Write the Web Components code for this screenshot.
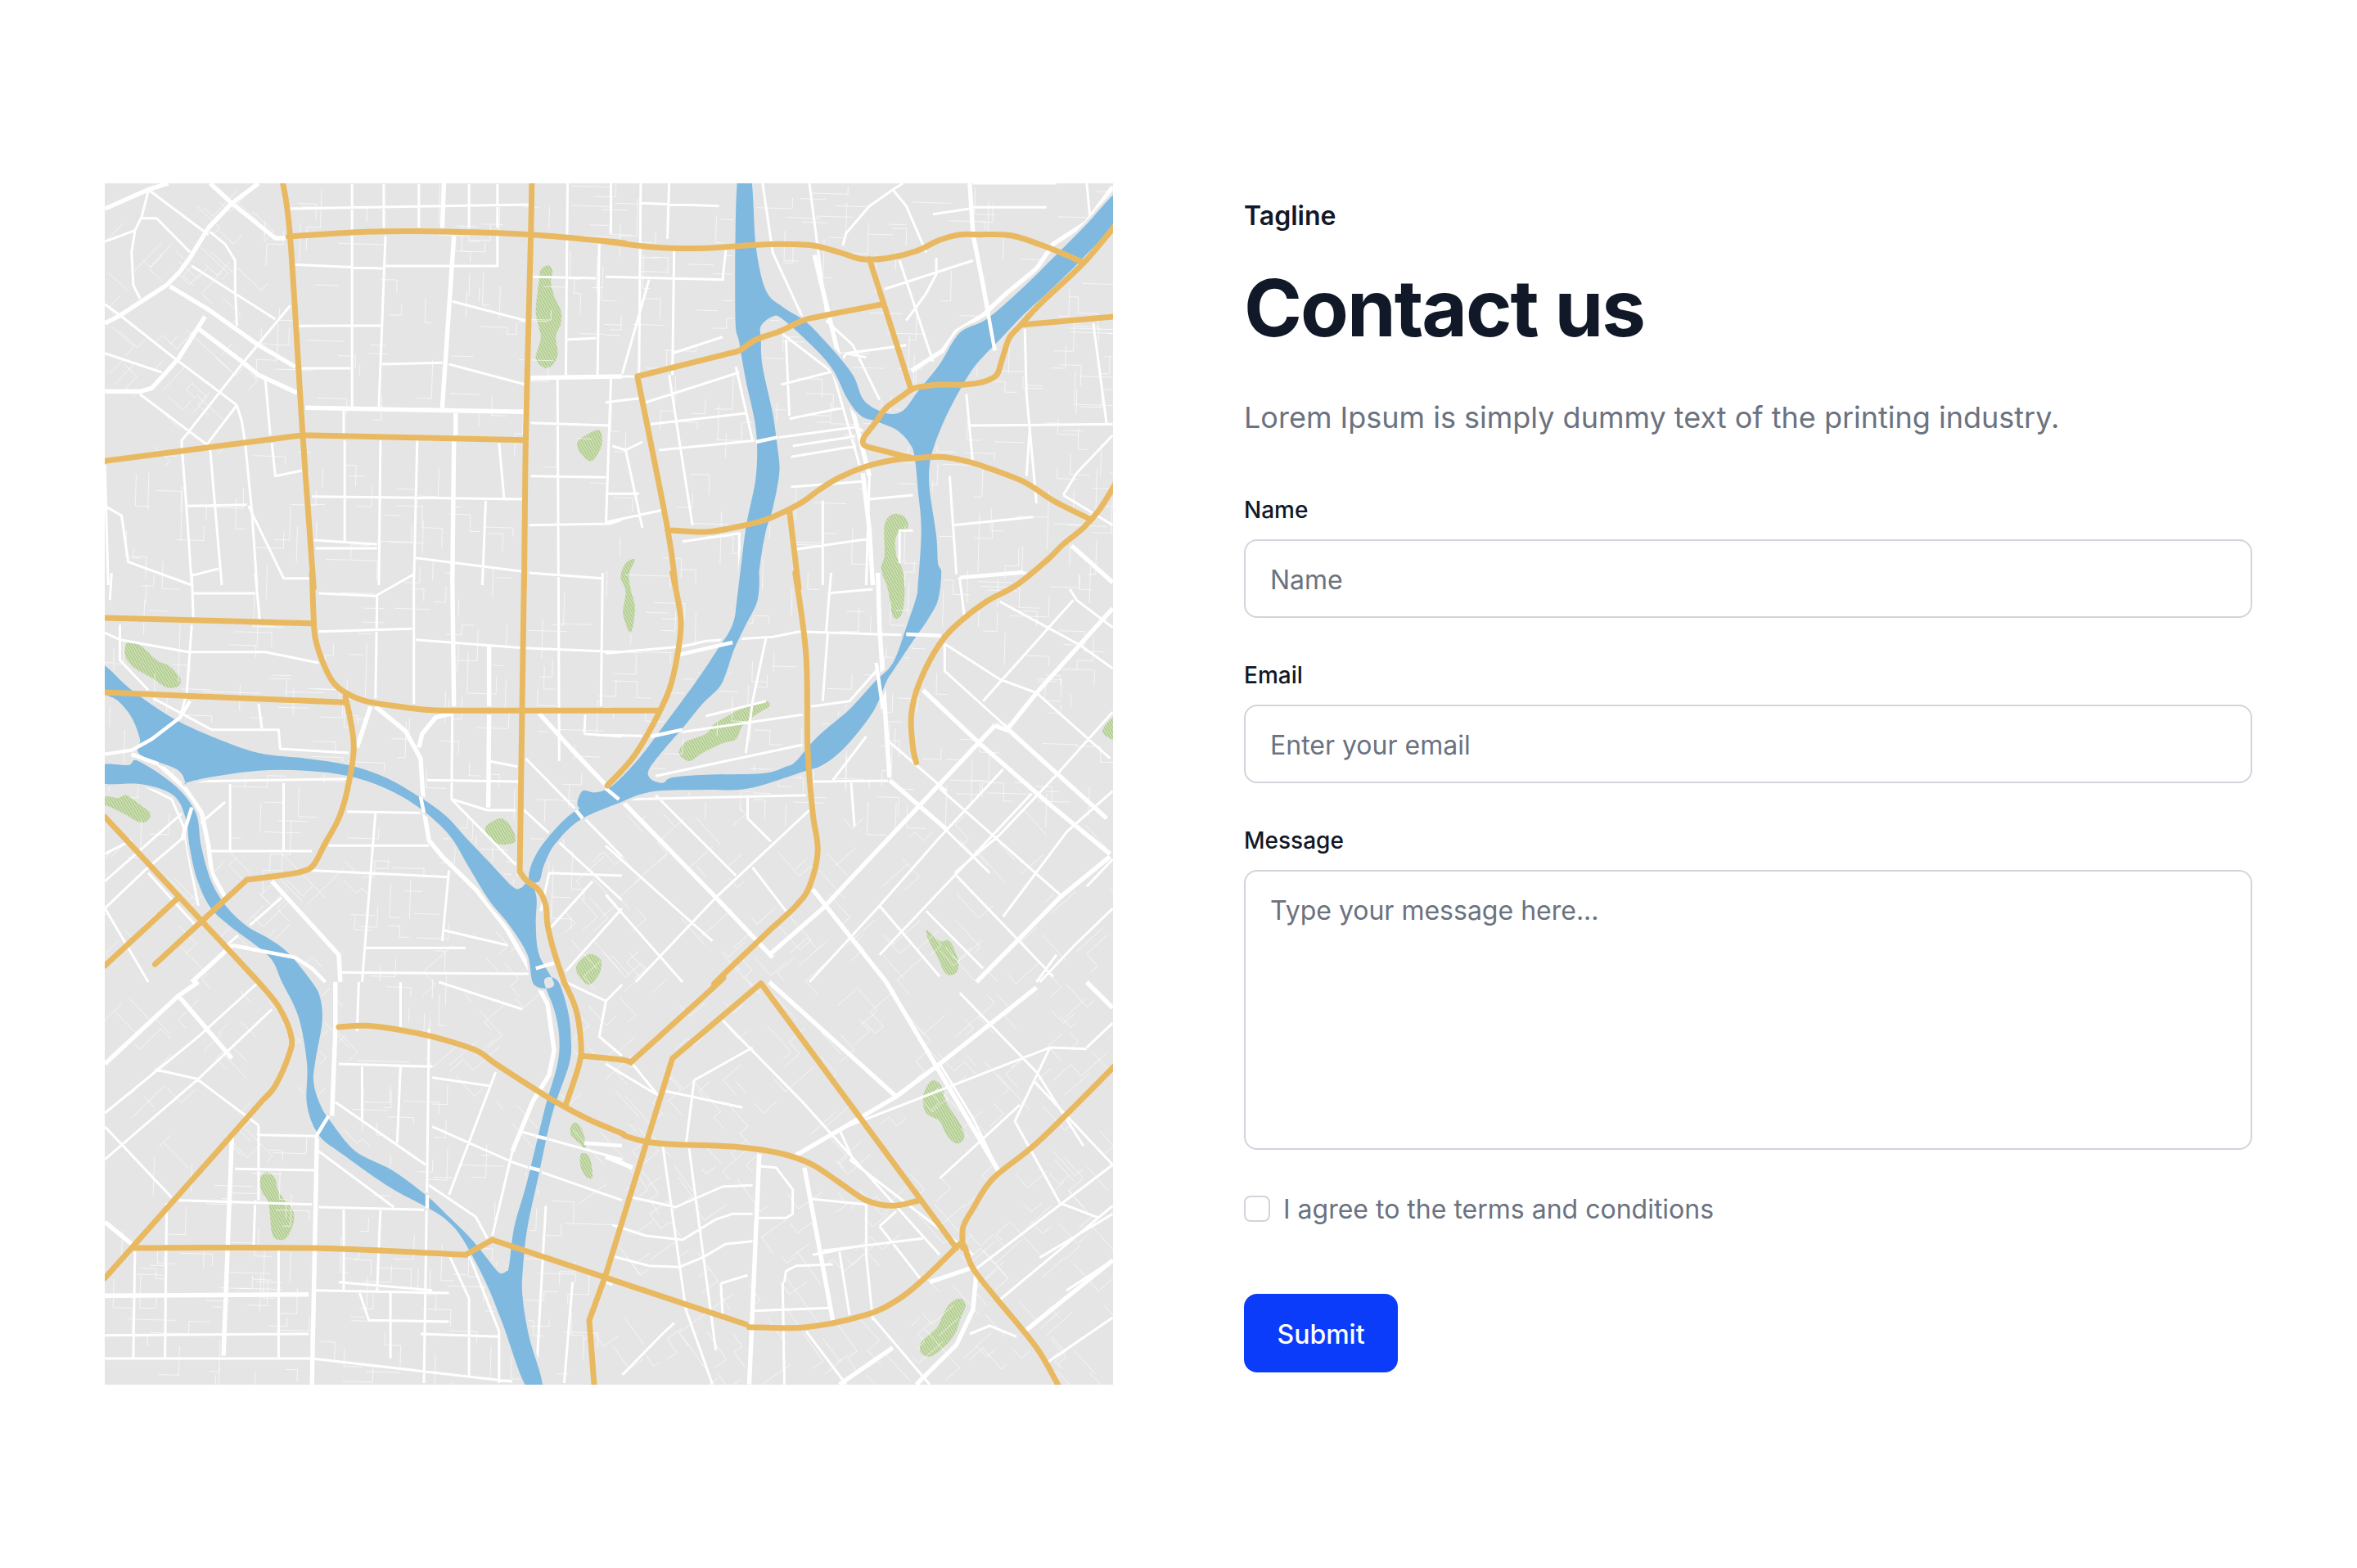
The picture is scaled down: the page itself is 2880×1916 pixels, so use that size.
<!DOCTYPE html>
<html lang="en">
<head>
<meta charset="utf-8">
<title>Contact us</title>
<style>
html,body{margin:0;padding:0;background:#fff}
body{font-family:Inter,"Liberation Sans",sans-serif}
</style>
</head>
<body>
<contact-page>
  <map-panel slot="map"></map-panel>
  <contact-form slot="form"></contact-form>
</contact-page>
<script>
/* ---------- map data: coordinates noted per inspected tile ---------- */
const TILES={A:[120,215],B:[740,215],C:[120,700],D:[740,700],E:[120,1200],F:[740,1200]};
function conv(t,x,y){const o=TILES[t];return [o[0]+x/2.45-128,o[1]+y/3-224];}
function parse(str){
  let t='A';const subs=[];
  str.split('/').forEach(s=>{
    const pts=[];
    s.trim().split(/\s+/).forEach(k=>{
      if(/^[A-F]$/.test(k)){t=k;return;}
      if(!k)return;
      const [x,y]=k.split(',').map(Number);
      pts.push(conv(t,x,y));
    });
    if(pts.length)subs.push(pts);
  });
  return subs;
}
const f=n=>n.toFixed(1);
function line(pts){return 'M'+pts.map(p=>f(p[0])+' '+f(p[1])).join('L');}
function smooth(pts,closed){
  const n=pts.length;let d='M'+f(pts[0][0])+' '+f(pts[0][1]);
  const g=i=>closed?pts[(i+n)%n]:pts[Math.max(0,Math.min(n-1,i))];
  const last=closed?n:n-1;
  for(let i=0;i<last;i++){
    const p0=g(i-1),p1=g(i),p2=g(i+1),p3=g(i+2);
    d+='C'+f(p1[0]+(p2[0]-p0[0])/6)+' '+f(p1[1]+(p2[1]-p0[1])/6)+' '+f(p2[0]-(p3[0]-p1[0])/6)+' '+f(p2[1]-(p3[1]-p1[1])/6)+' '+f(p2[0])+' '+f(p2[1]);
  }
  return d+(closed?'Z':'');
}
const polys=s=>parse(s).map(line).join('');
const curves=s=>parse(s).map(p=>smooth(p,false)).join('');
const blobs=s=>parse(s).map(p=>smooth(p,true)).join('');

const THICK=`A 20,120 150,50 210,27 / 335,27 400,100 530,228 560,228 / 480,27 400,100 330,190 275,300 245,350 205,400 60,515 20,540 /
 215,405 330,490 480,620 590,700 / 300,560 430,680 480,730 595,795 / 20,790 125,790 160,778 185,745 240,670 320,515 /
 1065,220 1030,850 / 1035,27 1030,190 / 620,850 1280,865 / 1070,860 1070,950 / 1065,970 1060,1500 / 1295,740 1568,735 /
 B 1090,27 1100,215 1130,400 1165,640 / 1200,430 1130,510 1050,570 1010,640 915,715 / 1518,40 1440,170 1340,250 1290,340 1200,430 / 1395,1355 1518,1490 /
 770,1090 790,1300 800,1500 / 625,290 690,620 790,1100 /
 C 100,665 180,700 260,790 310,880 330,1000 340,1100 380,1190 / 830,490 920,580 965,680 975,870 990,980 1030,1040 1130,1160 1220,1300 1300,1470 /
 1060,515 1010,530 970,590 960,640 / 815,490 775,640 / 1320,515 1420,650 1568,840 / 520,1130 720,1400 725,1500 / 280,1500 400,1365 /
 1060,0 1065,490 / 1170,520 1168,860 / 1170,270 1170,490 /
 D 815,0 820,200 850,750 / 10,790 60,850 330,1190 500,1410 / 950,430 1115,620 1340,860 1510,1030 / 850,760 1020,940 / 620,1160 840,1500 /
 1165,560 650,1230 490,1400 / 1518,130 1290,440 1205,570 / 1510,1040 1360,1190 1110,1500 / 1165,560 1210,580 1500,900 /
 E 20,300 240,50 300,0 / 710,0 710,170 700,490 / 655,570 640,1475 / 400,570 375,1370 / 1310,0 1345,80 1365,250 1350,340 1300,440 1240,620 /
 20,880 100,960 / 240,50 400,280 / 20,1150 630,1145 /
 F 840,0 1175,690 / 490,0 870,420 / 0,640 80,680 / 460,630 430,1475 / 595,680 680,1240 / 570,635 870,420 1000,300 1290,20 / 970,1100 1090,1050 / 1440,0 1518,95 / 1250,1285 1518,1020 / 700,1475 860,1340 / 1110,1060 1100,1200 1050,1330 930,1475`;

const MED=`A 130,155 175,155 275,280 / 155,55 275,165 330,215 / 20,240 110,200 / 110,200 100,280 105,400 125,450 / 110,200 130,150 150,55 /
 335,205 380,250 410,310 410,410 415,550 / 280,330 530,525 / 20,470 70,515 230,670 415,840 / 250,985 250,970 430,690 575,475 / 125,800 325,985 /
 325,985 415,840 / 415,840 430,900 440,980 460,1230 475,1500 / 20,650 190,720 / 250,985 265,1230 280,1500 / 335,1000 370,1500 / 265,1210 445,1205 / 280,1465 360,1440 /
 20,1060 30,1500 / 20,1210 70,1245 90,1415 280,1500 / 450,1210 555,1475 640,1475 / 500,740 515,950 / 520,980 530,1100 610,1080 / 640,1175 1280,1185 /
 570,120 1290,105 / 580,325 860,340 / 860,330 1195,330 1195,220 / 860,220 840,850 / 760,30 760,850 / 960,30 960,190 / 855,30 855,190 / 1195,30 1195,190 / 1110,30 1110,190 /
 600,550 850,548 / 610,705 755,705 / 850,690 1030,685 / 1050,690 1280,765 / 1060,460 1280,530 / 735,855 735,945 / 738,970 738,1340 / 845,970 840,1500 / 955,970 945,1500 /
 1200,980 1215,1180 / 1160,1190 1150,1500 / 645,1335 835,1350 / 650,1365 835,1365 / 950,1400 1270,1450 / 1405,27 1400,730 / 1535,27 1535,210 / 1500,250 1495,730 /
 1300,370 1490,375 / 1400,600 1490,595 / 1375,745 1378,1500 / 1535,745 1520,1280 / 1295,905 1530,915 / 1295,1100 1520,1105 / 1290,1280 1530,1275 1568,1260 / 1290,1455 1510,1475 /
 B 0,370 355,380 / 105,27 100,730 / 0,735 90,735 / 190,27 185,230 / 105,100 340,110 / 205,270 200,730 / 360,270 350,380 / 130,380 50,725 / 200,650 350,590 / 0,830 100,815 /
 120,830 400,720 / 190,730 260,1280 / 135,910 420,870 / 160,1005 450,970 510,960 750,920 770,935 / 20,990 60,1005 110,975 / 60,1005 110,1290 / 0,1165 100,1165 / 0,1270 170,1225 /
 390,700 440,970 / 470,27 500,280 590,520 / 560,990 745,955 / 540,600 550,880 / 525,765 700,710 / 550,890 710,850 / 555,1030 750,990 / 555,1140 770,1120 / 660,530 740,620 820,820 / 680,720 760,1060 /
 720,650 780,665 / 720,650 685,720 / 530,580 680,720 / 720,650 900,620 / 610,27 660,500 / 835,415 1100,310 / 880,310 980,680 / 990,300 990,360 960,430 900,530 / 710,255 720,210 790,110 860,50 890,27 / 860,50 900,110 960,280 /
 1100,115 1320,115 / 980,140 1090,120 / 1440,27 1450,150 / 1100,27 1350,27 / 1255,560 1260,800 1290,1200 / 1460,540 1500,910 / 1090,915 1518,910 / 1270,920 1260,1100 / 1080,800 1100,1060 / 1370,1170 1410,1090 1518,950 / 1370,1170 1518,1280 / 790,1185 920,1170 / 920,1300 880,1300 880,1420 / 560,1370 790,1330 / 650,1190 650,1500 / 780,1500 790,1100 / 1030,1100 1050,1460 /
 230,1340 400,1310 400,1500 / 1040,1280 1280,1250 / 1060,1470 1250,1450 / 
 C 20,220 65,245 270,290 500,290 660,330 / 65,190 65,320 150,430 / 165,460 340,575 540,575 545,645 750,660 / 260,765 750,755 / 470,0 485,190 / 480,480 490,570 / 280,0 285,170 / 285,75 470,75 /
 280,190 265,440 245,530 / 40,0 35,100 / 660,75 830,85 945,5 / 835,85 830,460 / 660,215 940,205 / 945,0 945,480 / 950,245 1270,275 1568,290 / 1378,0 1380,690 /
 1280,680 1568,1040 / 1275,870 1568,1200 / 1060,515 1058,830 1250,1070 / 1060,830 1165,870 1250,870 / 1170,690 1255,710 / 985,760 1260,765 / 1455,590 1568,600 / 1458,520 1455,590 / 1510,0 1505,490 /
 745,875 965,880 / 335,1020 640,1020 / 690,1000 990,1000 / 395,775 395,1020 / 555,770 555,1020 / 830,880 790,1500 / 620,1090 1050,1115 / 1050,1090 1030,1350 / 1035,1310 1225,1365 / 800,1375 1100,1375 / 730,1465 1300,1470 /
 380,840 140,1090 20,1230 / 280,850 20,1130 / 20,1230 150,1500 / 550,1190 380,1370 / 20,770 130,775 220,830 255,930 280,1100 300,1220 / 1350,1100 1568,1110 / 1350,1100 1325,1240 / 1480,1130 1355,1300 / 1568,1230 1400,1460 / 150,1100 290,1290 / 20,1030 100,980 /
 D 0,295 230,270 300,250 500,235 580,215 810,225 1005,230 / 1015,260 1180,390 1290,440 1510,680 / 1015,260 1015,360 1205,570 / 1180,105 1420,265 1518,350 / 1400,100 1130,470 / 1190,720 1000,970 820,1220 610,1500 / 1518,510 1350,740 1180,960 1045,1100 /
 1518,800 1380,950 1190,1260 / 1518,1230 1400,1370 1300,1500 / 1275,810 1060,1090 820,1400 / 610,870 330,1190 90,1500 / 1000,790 1370,1190 / 840,610 1020,800 / 950,860 1150,1100 / 150,815 390,1110 / 0,1000 320,1350 / 0,1180 230,1500 / 440,1080 540,1240 / 820,1220 1000,1480 / 960,1240 1130,1450 / 1050,1110 1340,1480 /
 60,830 600,815 / 0,595 110,598 / 135,600 590,520 / 615,490 730,470 810,360 / 620,765 845,762 / 150,745 590,630 / 665,220 650,470 / 800,60 665,75 / 660,220 675,0 / 425,815 425,900 495,985 / 735,770 745,930 / 680,760 780,600 / 300,525 480,470 / 480,240 440,470 420,660 / 1390,60 1410,100 1518,200 / 1055,20 1260,0 / 1060,20 1075,170 /
 1350,1400 1290,1500 / 1440,1150 1518,1050 /
 E 20,480 300,200 480,0 / 20,650 300,355 520,100 / 170,320 295,355 480,525 / 20,530 220,790 / 475,560 650,565 / 480,525 480,800 / 410,685 650,690 / 240,800 640,815 / 660,825 975,835 / 720,300 990,310 / 990,170 985,700 975,1470 / 1000,350 1170,380 /
 1000,530 1240,660 1568,800 / 1270,550 1568,650 / 710,440 980,670 / 660,620 885,825 / 990,745 1130,860 1165,940 / 205,810 200,1380 / 110,980 105,1380 / 470,800 465,970 / 735,830 735,1130 / 845,830 835,1130 / 540,980 540,1375 / 645,1130 1050,1140 / 1050,1000 1110,1160 1110,1450 / 1110,1000 1200,1280 1200,1470 /
 780,1130 810,1240 1050,1245 / 875,1140 875,1380 / 965,1290 1200,1300 / 1190,330 1050,780 / 1240,620 1180,930 / 1020,0 1270,100 / 1400,0 1520,70 1500,200 1568,270 / 1568,10 1520,70 / 1340,820 1310,1470 / 1420,1100 1395,1470 / 20,1380 640,1380 1240,1465 / 20,1295 630,1290 / 780,0 775,180 / 905,0 905,170 / 720,300 1000,310 / 790,310 790,510 / 905,310 895,590 / 720,1100 1000,1130 /
 F 1060,40 1290,330 1430,600 / 1518,670 1110,1050 / 1175,1170 1518,820 / 1315,1400 1518,1230 / 180,400 410,460 / 265,360 240,600 / 265,360 440,240 / 20,1005 130,1040 220,1045 290,1010 360,960 440,950 / 20,890 120,930 230,945 330,870 380,850 440,850 / 80,790 210,825 350,750 440,745 /
 460,675 510,680 560,760 560,850 540,865 450,865 / 615,795 780,815 780,1000 800,1240 / 650,985 950,940 / 820,895 870,840 / 820,895 950,1100 / 1090,1290 1150,1260 1230,1300 / 345,1105 425,1075 / 345,1105 350,1215 / 205,1250 170,1290 50,1440 / 440,1205 670,1195 / 535,1100 540,1060 570,1040 680,1035 / 530,1100 535,1475 / 600,1280 720,1475 / 800,1230 970,1475 / 0,640 50,650 / 80,300 160,420 / 250,610 330,1350 / 170,590 240,1200 320,1475 / 0,1100 20,1110 / 620,1000 750,970 / 700,990 730,1220 / 740,650 700,540 1330,240 / 1330,240 1440,245 / 1330,240 1225,510 1360,810 / 1360,810 1478,865 / 1280,360 1518,670 / 1440,240 1518,150 / 1100,500 1000,300 / 1000,720 1240,450 / 0,300 150,410 / 350,140 590,440 / 590,440 1000,1000 / 730,650 1100,1000 / 1100,500 1175,690 / 1380,1130 1518,1020 / 1300,1010 1518,850`;

const WATER=`B 395,10 388,500 400,610 420,750 450,930 450,1100 420,1290 D 395,80 380,190 330,290 270,400 180,550 100,680 20,780 -30,805 -70,800 -80,860 0,855 60,830 150,800 300,795 430,790 600,725 640,710 690,670 745,600 805,500 840,400 860,360 920,250 965,170 995,100 1005,0 B 995,1420 990,1320 970,1150 970,1060 985,985 1020,880 1065,775 1110,690 1180,600 1250,510 1330,420 1430,300 1540,150 1540,50 1430,190 1340,300 1240,420 1140,525 1060,575 1000,690 935,790 890,860 840,870 775,825 745,740 710,680 660,610 600,535 530,480 480,420 450,260 435,10`;
const ISLAND=`B 465,600 465,550 500,515 530,525 620,625 680,710 725,820 765,880 810,900 870,930 910,980 925,1030 935,1150 945,1300 935,1500 D 930,90 900,200 860,330 805,400 730,500 635,600 570,690 540,710 470,735 300,740 200,750 170,770 135,755 130,720 180,640 230,570 290,480 340,420 360,370 385,280 420,190 455,100 460,0 B 455,1500 465,1400 480,1300 500,1220 520,1090 515,1000 500,870 470,700`;
const WEDGE=`C 10,335 100,430 220,530 340,600 480,660 620,680 750,705 860,750 960,820 1040,890 1100,970 1170,1060 1240,1150 1265,1155 1292,1130 1312,1190 1310,1290 1320,1400 1365,1510 1305,1510 1285,1400 1230,1290 1170,1200 1110,1080 1050,960 960,860 860,790 750,745 620,725 480,725 330,750 262,770 262,770 235,720 125,665 125,610 100,530 60,470 10,430`;
const ARM=`C 1290,1125 1300,1060 1340,980 1420,880 1530,810 1600,780 1600,820 1450,900 1370,990 1335,1070 1320,1130`;
const SOUTH=`E 1335,-5 1365,100 1380,200 1375,300 1340,450 1310,600 1280,750 1245,900 1230,1040 1222,1060 1205,1068 1188,1050 1140,975 1100,920 1050,860 985,785 880,690 770,620 695,510 665,450 645,370 650,290 670,150 665,60 640,0 C 570,1395 510,1340 445,1295 385,1225 338,1130 308,1000 292,880 230,780 120,690 90,705 10,705 10,770 130,775 225,815 262,900 273,1000 295,1120 335,1225 395,1295 510,1405 E 550,0 600,130 625,300 625,450 660,560 730,630 870,750 975,820 1040,870 1090,940 1160,1100 1210,1250 1280,1480 1330,1480 1290,1300 1270,1150 1272,1040 1285,900 1320,700 1360,480 1410,300 1415,200 1405,100 1375,-5`;

const BRIDGES=`B 450,975 515,958 / 1130,400 1165,640 / C 275,470 245,530 160,610 100,650 20,665 / 100,665 180,700 / 965,820 975,880 / 1310,1450 1365,1430 / 400,1365 590,1410 640,1450 680,1500 / 280,860 250,980 / 1430,870 1450,900 /
 D 220,300 380,255 / 135,600 230,575 / 900,225 1005,230 / 810,330 830,500 / 0,790 40,830 / E 650,570 690,490 / 985,780 985,830 / 1310,565 1345,575 / 1290,680 1322,690 / 1455,590 1568,600`;

const YELLOW_C=[
 `A 552,20 575,230 612,945 645,1510`,
 `A 1298,20 1295,220 1280,970 1275,1510`,
 `A 570,222 800,205 1000,203 1295,215 1568,245 B 0,240 150,262 300,265 420,255 520,250 620,255 700,280 770,305 850,300 930,275 1000,235 1060,215 1120,215 1220,220 1340,270 1425,315`,
 `A 20,1045 612,950`,`A 612,950 1280,968`,
 `B 1540,160 1430,320 1300,470 1240,550 1210,590 1195,640 1185,680 1170,730 1130,755 1075,765 1000,765 960,770 920,780 890,805 840,850 810,900 775,955 770,975 775,988 790,995`,
 `B 790,995 920,1035`,
 `B 790,305 915,785`,
 `B 95,735 355,655 400,640 450,600 520,570 590,530 640,515 830,470`,
 `B 95,735 185,1290 210,1510`,
 `B 1250,545 1530,515`,
 `B 185,1298 300,1305 400,1285 480,1260 540,1228 590,1195 640,1150 700,1105 780,1065 860,1042 920,1035 1000,1030 1060,1040 1120,1060 1250,1120 1340,1190 1445,1255`,
 `B 550,1225 578,1510`,
 `B 1530,1120 1480,1220 1430,1290 1370,1350 1320,1410 1230,1500 D 1140,105 1060,180 1000,260 940,400 915,520 920,640 930,695`,
 `C 20,165 640,185`,
 `C 640,0 645,170 650,240 670,320 700,395 735,435 800,470 900,490 1000,503 1200,505 1568,505 D 0,505 160,505`,
 `C 20,438 740,475`,
 `C 740,455 755,540 765,650 745,800 720,900 680,990 645,1070 610,1095 540,1110 445,1125`,
 `C 445,1125 170,1435`,
 `C 1275,0 1262,1095`,
 `C 1262,1095 1280,1125 1320,1165 1340,1220 1345,1290 1365,1390 1395,1500 E 1395,0 1430,100 1445,220 1440,300 1400,450`,
 `C 20,895 480,1500`,
 `C 480,1500 E 540,90 578,200 570,270 530,380 495,430`,
 `E 495,430 20,1085`,
 `C 240,1190 20,1440`,
 `D 5,780 80,680 140,560 190,430 215,300 225,170 200,0`,
 `D 568,0 600,300 605,650 620,880 635,1020 610,1150 570,1220 500,1300`,
 `D 500,1300 330,1500 F 340,0 75,295`,
 `E 1445,270 1568,285 F 75,295`,
 `F 465,5 200,280`,`F 200,280 0,1075`,`F 0,1075 E 1470,1240`,`E 1470,1240 1485,1480`,
 `F 465,5 1050,975`,
 `E 720,165 800,160 900,175 1000,200 1130,250 1190,300 1330,410 1400,460 1480,510 1568,555 F 60,565 120,585 200,595 400,605 530,630 620,670 700,735 780,800 860,820 940,800`,
 `E 100,975 640,975 1100,1000`,`E 1100,1000 1180,945`,`E 1180,945 F 420,1255`,
 `F 430,1265 600,1265 780,1220 880,1160 960,1080 1060,960`,
 `F 1070,975 1070,900 1100,830 1160,720 1300,580 1530,300`,
 `F 1075,970 1100,1050 1170,1160 1290,1340 1360,1490`
];
const PARKS=`A 1345,328 1360,345 1355,390 1365,440 1385,495 1385,540 1370,590 1375,660 1345,705 1310,670 1325,590 1310,500 1320,380 1325,345 /
 1500,932 1508,980 1490,1030 1470,1045 1440,1010 1435,975 1460,950 /
 B 88,1405 70,1460 D 75,60 88,130 75,218 52,150 60,70 B 45,1470 60,1420 /
 B 860,1240 895,1250 905,1290 870,1320 870,1390 890,1450 D 895,80 885,155 860,160 845,60 B 825,1440 835,1390 835,1280 /
 C 90,250 130,270 175,320 210,340 245,385 240,415 205,420 160,385 105,345 80,300 /
 20,820 60,825 85,815 125,850 155,880 150,905 125,915 80,885 40,860 20,850 /
 1205,900 1235,930 1248,985 1200,995 1170,965 1160,930 /
 1470,1398 1505,1420 1500,1470 1470,1510 1440,1480 1432,1440 /
 D 480,470 490,490 450,520 410,560 390,610 350,625 290,660 250,690 220,660 240,620 300,590 330,550 420,490 /
 962,1310 1000,1350 1030,1350 1055,1420 1050,1465 1020,1470 990,1400 965,1340 /
 1530,525 1495,560 1490,590 1530,610 /
 E 505,697 530,720 540,770 580,830 585,880 565,935 540,945 520,920 510,810 490,770 485,720 /
 1430,515 1450,545 1460,610 1440,590 1415,560 1415,530 / 1445,630 1470,640 1480,710 1465,718 1445,680 /
 F 975,362 1005,380 1020,440 1045,490 1070,540 1072,575 1050,592 1020,560 1000,510 960,480 950,420 /
 1060,1160 1078,1185 1060,1240 1050,1280 1020,1330 975,1372 945,1360 945,1320 990,1270 1010,1220 1030,1180`;

/* fine alleys: a seeded scatter of short jogged lines following each district's street grid */
function alleys(){
  let s=20240611;
  const r=()=>{s=(s+0x6D2B79F5)|0;let t=Math.imul(s^s>>>15,1|s);t=t+Math.imul(t^t>>>7,61|t)^t;return((t^t>>>14)>>>0)/4294967296;};
  let d='';
  for(let i=0;i<1100;i++){
    const x=r()*1232,y=r()*1468;
    let a=0.03;
    if(y>760&&x>600-(y-760)*0.2&&!(y>1180&&x<900)) a=0.84;
    else if(x>420&&y>880&&y<1160&&x<620) a=0.84;
    else if(y>800&&y<1180&&x<300) a=0.8;
    else if(y>1040&&x>600) a=0.95;
    else if(x<190&&y<330) a=0.75;
    const len=12+r()*36,c=Math.cos(a),n=Math.sin(a);
    const h=r()<.5;
    const ux=h?c:-n,uy=h?n:c,vx=h?-n:c,vy=h?c:n;
    let pts=[[x,y],[x+ux*len,y+uy*len]];
    if(r()<.55){const j=(r()<.5?-1:1)*(8+r()*18);pts.push([pts[1][0]+vx*j,pts[1][1]+vy*j]);}
    if(r()<.2){const l2=10+r()*20;const q=pts[pts.length-1];pts.push([q[0]+ux*l2,q[1]+uy*l2]);}
    d+=line(pts);
  }
  return d;
}
const mapSvg=()=>{
  const river=blobs(WATER+' / '+ISLAND);
  const others=blobs(SOUTH)+blobs(WEDGE)+blobs(ARM);
  return `<svg viewBox="0 0 1232 1468" width="1232" height="1468" xmlns="http://www.w3.org/2000/svg" role="img" aria-label="City map">
<defs>
<pattern id="h" width="3" height="3" patternUnits="userSpaceOnUse" patternTransform="rotate(60)"><rect width="3" height="3" fill="#d5e3c0"/><rect width="3" height="1.5" fill="#a9c884"/></pattern>
</defs>
<rect width="1232" height="1468" fill="#e5e5e5"/>
<path d="${blobs(PARKS)}" fill="url(#h)"/>
<path d="${alleys()}" fill="none" stroke="#fff" stroke-opacity=".72" stroke-width=".9"/>
<path d="${polys(MED)}" fill="none" stroke="#fff" stroke-width="3" stroke-linejoin="round"/>
<path d="${polys(THICK)}" fill="none" stroke="#fff" stroke-width="5.4" stroke-linejoin="round"/>
<path d="${river+others}" fill="none" stroke="#e5e5e5" stroke-width="6" stroke-linejoin="round"/>
<g fill="#80b9e0">
<path d="${river}" fill-rule="evenodd"/>
<path d="${others}"/>
</g>
<path d="${polys(BRIDGES)}" fill="none" stroke="#fff" stroke-width="4.4" stroke-linejoin="round"/>
<path d="${YELLOW_C.map(curves).join('')}" fill="none" stroke="#e9b962" stroke-width="7" stroke-linejoin="round" stroke-linecap="round"/>
</svg>`;};

/* ---------- components ---------- */
class MapPanel extends HTMLElement{
  constructor(){super();
    this.attachShadow({mode:'open'}).innerHTML=`<style>:host{display:block;width:1232px;height:1468px;overflow:hidden}svg{display:block}</style>${mapSvg()}`;
  }
}
customElements.define('map-panel',MapPanel);

class FormField extends HTMLElement{
  constructor(){super();
    const multi=this.hasAttribute('multiline');
    this.attachShadow({mode:'open'}).innerHTML=`<style>
      :host{display:flex;flex-direction:column;gap:13px}
      .label{font:500 28px/45px Inter,"Liberation Sans",sans-serif;color:#111827}
      .box{box-sizing:border-box;width:100%;height:${multi?342:96}px;border:2px solid #d1d5db;border-radius:16px;background:#fff;
        padding:${multi?'24px 30px 0':'3px 30px 0'};display:flex;align-items:${multi?'flex-start':'center'};
        font:400 32px/48px Inter,"Liberation Sans",sans-serif;color:#6b7280}
    </style><div class="label">${this.getAttribute('label')}</div><div class="box" role="textbox">${this.getAttribute('placeholder')}</div>`;
  }
}
customElements.define('form-field',FormField);

class CheckRow extends HTMLElement{
  constructor(){super();
    this.attachShadow({mode:'open'}).innerHTML=`<style>
      :host{display:flex;align-items:center;gap:16px;height:48px;font:400 32px/48px Inter,"Liberation Sans",sans-serif;color:#6b7280}
      .c{box-sizing:border-box;width:32px;height:32px;border:2px solid #d1d5db;border-radius:8px;background:#fff;flex:none}
      .t{padding-top:2px}
    </style><span class="c" role="checkbox" aria-checked="false"></span><span class="t"><slot></slot></span>`;
  }
}
customElements.define('check-row',CheckRow);

class SubmitButton extends HTMLElement{
  constructor(){super();
    this.attachShadow({mode:'open'}).innerHTML=`<style>
      :host{display:inline-flex;align-self:flex-start;align-items:center;justify-content:center;box-sizing:border-box;height:96px;width:188px;padding-top:3px;border-radius:16px;background:#0a3cfa;color:#fff;font:500 32px/48px Inter,"Liberation Sans",sans-serif}
    </style><slot></slot>`;
  }
}
customElements.define('submit-button',SubmitButton);

class ContactForm extends HTMLElement{
  constructor(){super();
    this.attachShadow({mode:'open'}).innerHTML=`<style>
      :host{display:flex;flex-direction:column;width:1232px;font-family:Inter,"Liberation Sans",sans-serif}
      .tag{font:600 32px/50px Inter,"Liberation Sans",sans-serif;color:#111827}
      h1{margin:29px 0 48px;font:700 96px/116px Inter,"Liberation Sans",sans-serif;color:#111827;letter-spacing:-2px}
      p{margin:0 0 63px;font:400 36px/56px Inter,"Liberation Sans",sans-serif;color:#6b7280}
      .fields{display:flex;flex-direction:column;gap:48px}
      check-row{margin-top:48px}
      submit-button{margin-top:80px}
    </style>
    <div class="tag">Tagline</div>
    <h1>Contact us</h1>
    <p>Lorem Ipsum is simply dummy text of the printing industry.</p>
    <div class="fields">
      <form-field label="Name" placeholder="Name"></form-field>
      <form-field label="Email" placeholder="Enter your email"></form-field>
      <form-field label="Message" placeholder="Type your message here..." multiline></form-field>
    </div>
    <check-row>I agree to the terms and conditions</check-row>
    <submit-button>Submit</submit-button>`;
  }
}
customElements.define('contact-form',ContactForm);

class ContactPage extends HTMLElement{
  constructor(){super();
    this.attachShadow({mode:'open'}).innerHTML=`<style>
      :host{display:grid;grid-template-columns:1232px 1232px;column-gap:160px;align-items:center;box-sizing:border-box;width:2880px;height:1916px;padding:224px 128px;background:#fff}
    </style><slot name="map"></slot><slot name="form"></slot>`;
  }
}
customElements.define('contact-page',ContactPage);
</script>
</body>
</html>
